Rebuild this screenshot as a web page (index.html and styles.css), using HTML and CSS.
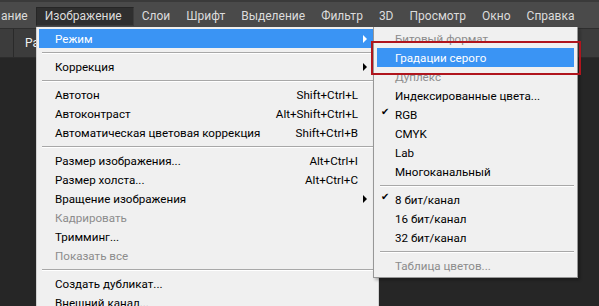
FILE: index.html
```html
<!DOCTYPE html>
<html lang="ru">
<head>
  <meta charset="UTF-8" />
  <title>Изображение — Режим</title>
  <link rel="stylesheet" href="styles.css">
</head>
<body>
  <nav class="menubar">
    <span class="menubar-item">ание</span>
    <span class="menubar-item active">Изображение</span>
    <span class="menubar-item">Слои</span>
    <span class="menubar-item">Шрифт</span>
    <span class="menubar-item">Выделение</span>
    <span class="menubar-item">Фильтр</span>
    <span class="menubar-item">3D</span>
    <span class="menubar-item">Просмотр</span>
    <span class="menubar-item">Окно</span>
    <span class="menubar-item">Справка</span>
  </nav>

  <div class="toolbar">
    <span class="tool-divider"></span>
    <span class="tool-label">Ра</span>
  </div>

  <div class="workspace"></div>

  <!-- Image menu -->
  <ul class="menu main-menu">
    <li class="item selected has-sub">Режим</li>
    <li class="sep"></li>
    <li class="item has-sub">Коррекция</li>
    <li class="sep"></li>
    <li class="item">Автотон <span class="key">Shift+Ctrl+L</span></li>
    <li class="item">Автоконтраст <span class="key">Alt+Shift+Ctrl+L</span></li>
    <li class="item">Автоматическая цветовая коррекция <span class="key">Shift+Ctrl+B</span></li>
    <li class="sep"></li>
    <li class="item">Размер изображения... <span class="key">Alt+Ctrl+I</span></li>
    <li class="item">Размер холста... <span class="key">Alt+Ctrl+C</span></li>
    <li class="item has-sub">Вращение изображения</li>
    <li class="item disabled">Кадрировать</li>
    <li class="item">Тримминг...</li>
    <li class="item disabled">Показать все</li>
    <li class="sep"></li>
    <li class="item">Создать дубликат...</li>
    <li class="item">Внешний канал...</li>
  </ul>

  <!-- Mode submenu -->
  <ul class="menu sub-menu">
    <li class="item disabled">Битовый формат</li>
    <li class="item selected">Градации серого</li>
    <li class="item disabled">Дуплекс</li>
    <li class="item">Индексированные цвета...</li>
    <li class="item checked">RGB</li>
    <li class="item">CMYK</li>
    <li class="item">Lab</li>
    <li class="item">Многоканальный</li>
    <li class="sep"></li>
    <li class="item checked">8 бит/канал</li>
    <li class="item">16 бит/канал</li>
    <li class="item">32 бит/канал</li>
    <li class="sep"></li>
    <li class="item disabled">Таблица цветов...</li>
  </ul>

  <div class="callout"></div>
</body>
</html>
```

FILE: styles.css
```css
* {
  box-sizing: border-box;
}

body {
  margin: 0;
  width: 599px;
  height: 306px;
  overflow: hidden;
  position: relative;
  background: #262626;
  font-family: Roboto, "Noto Sans", sans-serif;
  font-size: 11.6px;
}

.menubar {
  display: flex;
  align-items: flex-end;
  height: 29px;
  padding-bottom: 2px;
  background: #4a4a4a;
  border-top: 2px solid #3a3a3a;
  border-bottom: 1px solid #2e2e2e;
  color: #dcdcdc;
  font-size: 12px;
  white-space: nowrap;
  overflow: hidden;
}

.menubar-item {
  padding: 0 7px;
  line-height: 17px;
  border: 1px solid transparent;
}

.menubar-item:first-child {
  padding-left: 0;
}

.menubar-item.active {
  padding: 0 11px 0 8px;
  background: #2f2f2f;
  border-color: #262626 #3c3c3c #3c3c3c #262626;
}

.toolbar {
  display: flex;
  align-items: center;
  height: 29px;
  background: #3c3c3c;
  border-bottom: 1px solid #2c2c2c;
}

.tool-divider {
  width: 1px;
  height: 100%;
  margin-left: 13px;
  background: #2a2a2a;
}

.tool-label {
  margin-left: 11px;
  color: #f0f0f0;
  font-size: 12px;
}

.workspace {
  height: 250px;
}

/* dropdown menus */
.menu {
  position: absolute;
  margin: 0;
  padding: 2px;
  list-style: none;
  background: #f0f0f0;
  color: #000;
}

.main-menu {
  left: 36px;
  top: 27px;
  width: 343px;
  border: 1px solid #d0d0d0;
  border-top: none;
}

.sub-menu {
  left: 373px;
  top: 27px;
  width: 205px;
  padding: 2px 3px;
  border: 1px solid #979797;
  border-top: none;
  box-shadow: 2px 2px 3px rgba(0, 0, 0, 0.3);
}

.item {
  position: relative;
  display: flex;
  justify-content: space-between;
  align-items: center;
  height: 19px;
  padding: 0 18px 0 16px;
  white-space: nowrap;
}

.sub-menu .item {
  padding-left: 18px;
}

.item.selected {
  background: #3a94f4;
  color: #fff;
}

.item.disabled {
  color: #8c8c8c;
}

.key {
  text-align: right;
}

.has-sub::after {
  content: "";
  position: absolute;
  right: 9px;
  top: 6px;
  border-left: 4px solid #000;
  border-top: 4px solid transparent;
  border-bottom: 4px solid transparent;
}

.has-sub.selected::after {
  border-left-color: #fff;
}

.checked::before {
  content: "✔";
  position: absolute;
  left: 4px;
  top: 1px;
  font-size: 10px;
  font-family: "DejaVu Sans", sans-serif;
}

.sep {
  height: 9px;
  display: flex;
  align-items: center;
  padding-left: 3px;
}

.sep::after {
  content: "";
  flex: 1;
  height: 1px;
  background: #a8a8a8;
  border-bottom: 1px solid #fff;
}

.callout {
  position: absolute;
  left: 371px;
  top: 41px;
  width: 210px;
  height: 34px;
  border: 2px solid #b0151d;
}
```
